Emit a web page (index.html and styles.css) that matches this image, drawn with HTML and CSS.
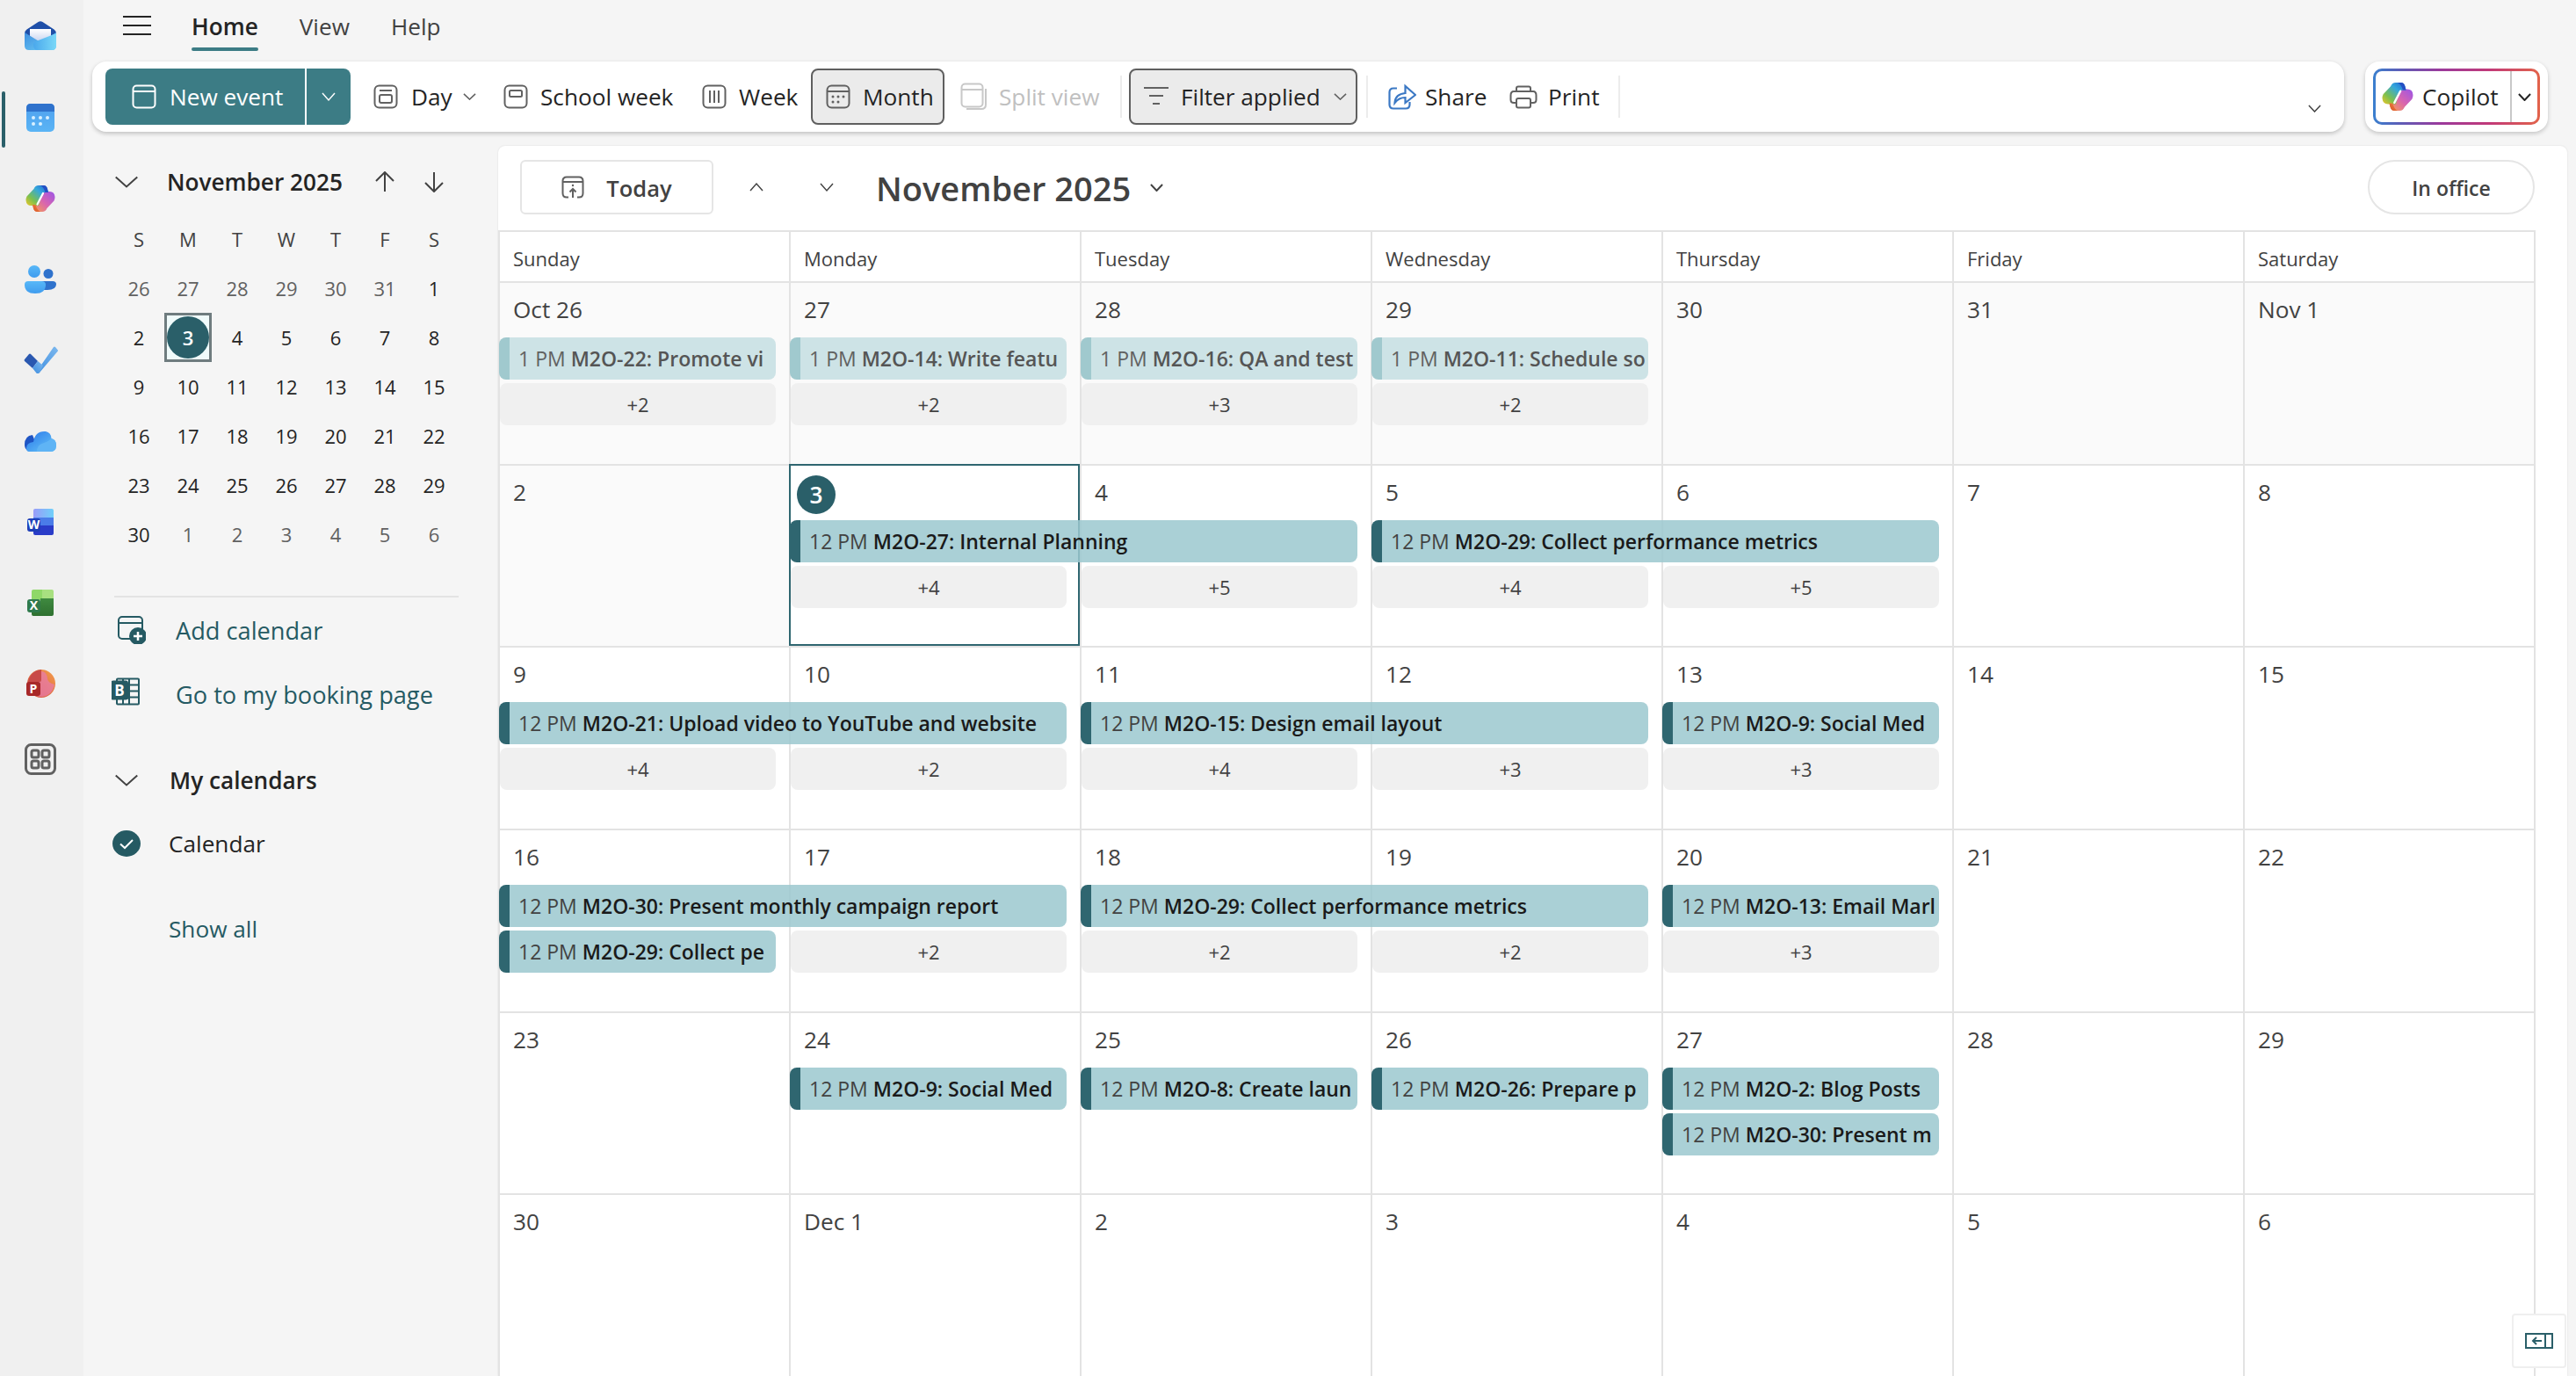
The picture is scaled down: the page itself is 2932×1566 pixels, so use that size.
FILE: index.html
```html
<!DOCTYPE html>
<html lang="en">
<head>
<meta charset="utf-8">
<title>Calendar</title>
<link rel="stylesheet" href="styles.css">
</head>
<body>
<svg class="defs" aria-hidden="true">
  <defs>
    <linearGradient id="gMail" x1="0" y1="0" x2="1" y2="1"><stop offset="0" stop-color="#3f8fe0"/><stop offset="1" stop-color="#6fd0f5"/></linearGradient>
    <linearGradient id="gMail2" x1="0" y1="0" x2="1" y2="0"><stop offset="0" stop-color="#4aa8ec"/><stop offset="1" stop-color="#7ad8f8"/></linearGradient>
    <linearGradient id="gPaper" x1="0" y1="0" x2="0" y2="1"><stop offset="0" stop-color="#ffffff"/><stop offset="1" stop-color="#c8d4f0"/></linearGradient>
    <linearGradient id="gCal" x1="0" y1="0" x2="0" y2="1"><stop offset="0" stop-color="#4fa0ee"/><stop offset="1" stop-color="#5ab4f5"/></linearGradient>
    <linearGradient id="gCoL" x1="1" y1="0" x2="0" y2="1"><stop offset="0" stop-color="#1f5fd0"/><stop offset=".35" stop-color="#35a8dc"/><stop offset=".7" stop-color="#7cc04e"/><stop offset="1" stop-color="#f0c628"/></linearGradient>
    <linearGradient id="gCoR" x1="1" y1="0" x2="0" y2="1"><stop offset="0" stop-color="#9a55e8"/><stop offset=".5" stop-color="#d864b0"/><stop offset="1" stop-color="#f8a24c"/></linearGradient>
    <linearGradient id="gCoB" x1="0" y1="1" x2="1" y2="0"><stop offset="0" stop-color="#d8512c"/><stop offset="1" stop-color="#f08a3c"/></linearGradient>
    <linearGradient id="gPpl" x1="0" y1="0" x2="0" y2="1"><stop offset="0" stop-color="#58b8f8"/><stop offset="1" stop-color="#3f9cee"/></linearGradient>
    <linearGradient id="gTodo" x1="0" y1="1" x2="1" y2="0"><stop offset="0" stop-color="#3f8ee0"/><stop offset="1" stop-color="#7cb8ee"/></linearGradient>
    <linearGradient id="gOne" x1="0" y1="0" x2="1" y2="1"><stop offset="0" stop-color="#2a78ea"/><stop offset="1" stop-color="#68c8f8"/></linearGradient>
    <linearGradient id="gWord" x1="0" y1="0" x2="1" y2="0"><stop offset="0" stop-color="#9a9cf8"/><stop offset="1" stop-color="#6fd0fa"/></linearGradient>
    <linearGradient id="gExcel" x1="0" y1="0" x2="0" y2="1"><stop offset="0" stop-color="#3f8a40"/><stop offset="1" stop-color="#2f7030"/></linearGradient>
    <linearGradient id="gPpt" x1="1" y1="0" x2="0" y2="1"><stop offset="0" stop-color="#f5a04c"/><stop offset="1" stop-color="#d04a40"/></linearGradient>
    <symbol id="chev" viewBox="0 0 16 9" preserveAspectRatio="none"><path d="M1 1 8 8 15 1" vector-effect="non-scaling-stroke"/></symbol>
    <symbol id="copilot" viewBox="0 0 34 32">
      <path fill="url(#gCoR)" d="M24.500 27Q23 31 19 31h-5.500q-3.500 0-4.500-4l-1-4h3q3.500 0 4.500-3.500L19 8h8.500Q33 8 33.500 14q.2 2-1 4.500z"/>
      <path fill="url(#gCoL)" d="M9.500 5Q11 1 15 1h5.500q3.500 0 4.500 4l1 4h-3q-3.500 0-4.500 3.500L15 24H6.500Q1 24 .5 18q-.2-2 1-4.500z"/>
      <path fill="#2450c4" d="M17 1h3.500q3.500 0 4.500 4l1 4h-3.500Q21 3 17 1z"/>
      <path fill="url(#gCoB)" d="M17 31h-3.500Q10 31 9 27l-1-4h3.500Q13 29 17 31z"/>
      <path fill="none" stroke="#fff" stroke-width="2.200" stroke-linecap="round" d="M20 10 13.500 22.500"/>
    </symbol>
  </defs>
</svg>

<nav class="rail">
  <a class="rail-item"><svg class="i-mail" viewBox="0 0 36 33"><path fill="#1f4fa8" d="M15.500 1q2.500-1.500 5 0l13 8.500Q36 11 36 14v4H0v-4q0-3 2.500-4.500z"/><path fill="url(#gPaper)" d="M6 9h24v14H6z"/><path fill="url(#gMail)" d="M0 13l18 11 18-11v15q0 5-5 5H5q-5 0-5-5z"/><path fill="url(#gMail2)" d="M10 27q0-3 3-4l23-9v14q0 5-5 5H15q-5 0-5-6z"/></svg></a>
  <a class="rail-item is-active"><svg class="i-cal" viewBox="0 0 32 32"><rect width="32" height="32" rx="5" fill="url(#gCal)"/><path fill="#2f72cc" d="M5 0h22q5 0 5 5v4H0V5q0-5 5-5z"/><g fill="#d9f0ff"><circle cx="8" cy="16" r="2"/><circle cx="16" cy="16" r="2"/><circle cx="24" cy="16" r="2"/><circle cx="8" cy="23" r="2"/><circle cx="16" cy="23" r="2"/></g></svg></a>
  <a class="rail-item"><svg class="i-co"><use href="#copilot"/></svg></a>
  <a class="rail-item"><svg class="i-ppl" viewBox="0 0 36 32"><circle cx="27" cy="9.500" r="5.500" fill="#2f72cc"/><path fill="#2f72cc" d="M18 18h14q4 0 4 3.500Q36 28 26 28q-8 0-8-2z"/><circle cx="11" cy="7" r="7" fill="url(#gPpl)"/><path fill="url(#gPpl)" d="M4 18h15q5 0 5 4 0 10-12 10T0 22q0-4 4-4z"/></svg></a>
  <a class="rail-item"><svg class="i-todo" viewBox="0 0 39 32"><path fill="url(#gTodo)" d="M14 30 34 1q1-1 2 0l2.500 3q1 1 0 2L18 30q-2 2-4 0z"/><path fill="#2a58b0" d="M1 15l5-6q1-1 2 0l8 8-6 8-9-8q-1-1 0-2z"/><path fill="url(#gTodo)" d="M10 25l6-8 6 5-4 8q-2 2-4 0z"/></svg></a>
  <a class="rail-item"><svg class="i-one" viewBox="0 0 36 24"><path fill="#1f55c4" d="M0 16Q0 6 9 5l4 10-6 9Q0 23 0 16z"/><path fill="url(#gOne)" d="M5 24Q2 24 2 20q0-6 8-7 2-13 14-12 6 1 6.500 8Q36 10 36 17q0 7-7 7z"/><path fill="#5fb4f5" d="M14 24q0-8 8-10 6-2 8-5 6 1 6 8 0 7-7 7z"/></svg></a>
  <a class="rail-item"><svg class="i-off" viewBox="0 0 30 30"><path fill="url(#gWord)" d="M7 2q0-2 2-2h19q2 0 2 2v10H7z"/><rect x="7" y="10" width="23" height="10" fill="#4a7ce8"/><path fill="#2a3cc8" d="M7 19h23v9q0 2-2 2H9q-2 0-2-2z"/><rect y="11" width="15" height="15" rx="3" fill="#1f3fb8"/><text class="i-letter" x="7.500" y="23">W</text></svg></a>
  <a class="rail-item"><svg class="i-off" viewBox="0 0 30 30"><path fill="#8fd868" d="M5 2q0-2 2-2h10v12H5z"/><path fill="#a8e080" d="M17 0h11q2 0 2 2v8H17z"/><path fill="url(#gExcel)" d="M15 10h15v18q0 2-2 2H7q-2 0-2-2v-8h10z"/><rect y="11" width="15" height="15" rx="3" fill="#2f7a4c"/><text class="i-letter" x="7.500" y="23">X</text></svg></a>
  <a class="rail-item"><svg class="i-ppt" viewBox="0 0 33 32"><circle cx="17" cy="16" r="16" fill="url(#gPpt)"/><path fill="#e87ca8" d="M17 2q6 0 7 8 0 5 8 7-3 13-14 14-8 0-11-6V8q5-6 10-6z" opacity=".75"/><path fill="#c84a48" d="M17 0Q5 1 2 14h13q2 0 2-2z"/><rect y="14" width="16" height="16" rx="3" fill="#a82828"/><text class="i-letter" x="8" y="26.500">P</text></svg></a>
  <a class="rail-item rail-apps"><svg class="i-apps" viewBox="0 0 36 36"><rect x="1.500" y="1.500" width="33" height="33" rx="6"/><rect x="8" y="8" width="8" height="8" rx="2"/><rect x="20" y="8" width="8" height="8" rx="2"/><rect x="8" y="20" width="8" height="8" rx="2"/><rect x="20" y="20" width="8" height="8" rx="2"/></svg></a>
</nav>

<div class="app">
  <header class="tabs">
    <svg class="burger" viewBox="0 0 32 22"><path d="M0 1h32M0 11h32M0 21h32"/></svg>
    <span class="tab is-on">Home</span>
    <span class="tab tab-view">View</span>
    <span class="tab tab-help">Help</span>
  </header>

  <div class="bars">
    <div class="toolbar">
      <div class="newbtn">
        <span class="newmain"><svg class="ico ico-w" viewBox="0 0 28 28"><rect x="1.500" y="1.500" width="25" height="25" rx="4"/><path d="M2 8h24"/></svg>New event</span>
        <span class="newdrop"><svg class="chev"><use href="#chev"/></svg></span>
      </div>
      <div class="tool t-day"><svg class="ico" viewBox="0 0 28 28"><rect x="1.500" y="1.500" width="25" height="25" rx="5"/><path d="M7 7h14"/><rect x="7" y="12" width="14" height="9" rx="2"/></svg><span>Day</span><svg class="chev"><use href="#chev"/></svg></div>
      <div class="tool t-school"><svg class="ico" viewBox="0 0 28 28"><rect x="1.500" y="1.500" width="25" height="25" rx="5"/><rect x="7" y="7" width="14" height="7" rx="1.500"/></svg><span>School week</span></div>
      <div class="tool t-week"><svg class="ico" viewBox="0 0 28 28"><rect x="1.500" y="1.500" width="25" height="25" rx="5"/><path d="M9 7v14M14 7v14M19 7v14"/></svg><span>Week</span></div>
      <div class="tool t-month is-sel"><svg class="ico" viewBox="0 0 28 28"><rect x="1.500" y="1.500" width="25" height="25" rx="5"/><path d="M2 8h24"/><g class="dots"><circle cx="8" cy="14" r="1.500"/><circle cx="14" cy="14" r="1.500"/><circle cx="20" cy="14" r="1.500"/><circle cx="8" cy="20" r="1.500"/><circle cx="14" cy="20" r="1.500"/></g></svg><span>Month</span></div>
      <div class="tool t-split"><svg class="ico ico-split" viewBox="0 0 31 32"><rect x="1.500" y="1.500" width="24" height="26" rx="4"/><path d="M2 8h23M29 7v18q0 5-5 5H7"/></svg><span>Split view</span></div>
      <i class="sep sep-a"></i>
      <div class="tool t-filter is-sel"><svg class="ico" viewBox="0 0 28 28"><path d="M0 4h28M6 13h16M10 22h8"/></svg><span>Filter applied</span><svg class="chev"><use href="#chev"/></svg></div>
      <i class="sep sep-b"></i>
      <div class="tool t-share"><svg class="ico ico-blue" viewBox="0 0 32 30"><path d="M10 5.500H6Q1.500 5.500 1.500 10v14Q1.500 28.500 6 28.500h14q4.500 0 4.500-4.500v-3"/><path d="M7.500 22Q8 12 19.500 11V3L31 13 19.500 22v-6Q12 16 7.500 22z"/></svg><span>Share</span></div>
      <div class="tool t-print"><svg class="ico" viewBox="0 0 32 27"><path d="M8 7V3.500Q8 1.500 10 1.500h12q2 0 2 2V7M8 20H5q-3.500 0-3.500-3.500v-5Q1.500 7 5 7h22q3.500 0 3.500 4.500v5Q30.500 20 27 20h-3"/><rect x="8" y="15" width="16" height="10.500" rx="2"/></svg><span>Print</span></div>
      <i class="sep sep-c"></i>
      <svg class="chev chev-more"><use href="#chev"/></svg>
    </div>
    <div class="copilot-wrap">
      <div class="copilot">
        <span class="co-main"><svg class="co-logo"><use href="#copilot"/></svg>Copilot</span>
        <span class="co-drop"><svg class="chev"><use href="#chev"/></svg></span>
      </div>
    </div>
  </div>

  <div class="work">
    <aside class="side">
      <div class="mini-head">
        <svg class="chev chev-big"><use href="#chev"/></svg>
        <span class="mini-title">November 2025</span>
        <svg class="arrow arrow-up" viewBox="0 0 24 24"><path d="M12 23V1M2 11 12 1l10 10"/></svg>
        <svg class="arrow" viewBox="0 0 24 24"><path d="M12 1v22M2 13l10 10 10-10"/></svg>
      </div>
      <div class="mini-grid">
        <span class="dh">S</span><span class="dh">M</span><span class="dh">T</span><span class="dh">W</span><span class="dh">T</span><span class="dh">F</span><span class="dh">S</span>
        <span class="out">26</span><span class="out">27</span><span class="out">28</span><span class="out">29</span><span class="out">30</span><span class="out">31</span><span>1</span>
        <span>2</span><span class="mini-today"><b>3</b></span><span>4</span><span>5</span><span>6</span><span>7</span><span>8</span>
        <span>9</span><span>10</span><span>11</span><span>12</span><span>13</span><span>14</span><span>15</span>
        <span>16</span><span>17</span><span>18</span><span>19</span><span>20</span><span>21</span><span>22</span>
        <span>23</span><span>24</span><span>25</span><span>26</span><span>27</span><span>28</span><span>29</span>
        <span>30</span><span class="out">1</span><span class="out">2</span><span class="out">3</span><span class="out">4</span><span class="out">5</span><span class="out">6</span>
      </div>
      <div class="side-div"></div>
      <a class="link"><svg class="link-ico ico-add" viewBox="0 0 32 32"><rect x="1" y="1" width="27" height="25" rx="4"/><path d="M1.500 8h26"/><circle class="solid" cx="23" cy="23" r="9"/><path class="plus" d="M23 18v10M18 23h10"/></svg>Add calendar</a>
      <a class="link"><svg class="link-ico ico-book" viewBox="0 0 32 31"><rect x="6" y="1" width="25" height="29" rx="1"/><path d="M20 1v29M20 8h11M20 15h11M20 22h11M6 8h14M6 23h14M13 1v7M13 23v7"/><rect class="solid" y="4" width="18" height="20" rx="2"/><text class="book-b" x="9" y="20">B</text></svg>Go to my booking page</a>
      <div class="group"><svg class="chev chev-big"><use href="#chev"/></svg><span>My calendars</span></div>
      <div class="calrow"><svg class="check" viewBox="0 0 32 30"><ellipse cx="16" cy="15" rx="16" ry="15"/><path d="M9 15.500l5 4.500 9-9"/></svg><span>Calendar</span></div>
      <a class="showall">Show all</a>
    </aside>

    <main class="panel">
      <div class="panel-head">
        <button class="today"><svg class="ico" viewBox="0 0 26 26"><path d="M8 24.500H6q-4.500 0-4.500-4.500V6Q1.500 1.500 6 1.500h14q4.500 0 4.500 4.500v14q0 4.500-4.500 4.500h-2M2 7h22M13 25V15M9.500 18.500 13 15l3.500 3.500"/><circle class="dot" cx="13" cy="11" r="1.200"/></svg><span class="today-label">Today</span></button>
        <svg class="chev nav-up"><use href="#chev"/></svg>
        <svg class="chev nav-down"><use href="#chev"/></svg>
        <h1 class="title">November 2025</h1>
        <svg class="chev title-chev"><use href="#chev"/></svg>
        <span class="inoffice">In office</span>
      </div>
      <div class="dow">
        <span>Sunday</span><span>Monday</span><span>Tuesday</span><span>Wednesday</span><span>Thursday</span><span>Friday</span><span>Saturday</span>
      </div>
      <div class="weeks">
        <section class="week">
          <div class="day past c1">Oct 26</div><div class="day past c2">27</div><div class="day past c3">28</div><div class="day past c4">29</div><div class="day past c5">30</div><div class="day past c6">31</div><div class="day past c7">Nov 1</div>
          <div class="ev old c1 r1"><span>1 PM</span> <b>M2O-22: Promote vi</b></div>
          <div class="ev old c2 r1"><span>1 PM</span> <b>M2O-14: Write featu</b></div>
          <div class="ev old c3 r1"><span>1 PM</span> <b>M2O-16: QA and test</b></div>
          <div class="ev old c4 r1"><span>1 PM</span> <b>M2O-11: Schedule so</b></div>
          <div class="more c1">+2</div><div class="more c2">+2</div><div class="more c3">+3</div><div class="more c4">+2</div>
        </section>
        <section class="week">
          <div class="day past c1">2</div><div class="day is-today c2"><b>3</b></div><div class="day c3">4</div><div class="day c4">5</div><div class="day c5">6</div><div class="day c6">7</div><div class="day c7">8</div>
          <div class="ev c2 s2 r1"><span>12 PM</span> <b>M2O-27: Internal Planning</b></div>
          <div class="ev c4 s2 r1"><span>12 PM</span> <b>M2O-29: Collect performance metrics</b></div>
          <div class="more c2">+4</div><div class="more c3">+5</div><div class="more c4">+4</div><div class="more c5">+5</div>
        </section>
        <section class="week">
          <div class="day c1">9</div><div class="day c2">10</div><div class="day c3">11</div><div class="day c4">12</div><div class="day c5">13</div><div class="day c6">14</div><div class="day c7">15</div>
          <div class="ev c1 s2 r1"><span>12 PM</span> <b>M2O-21: Upload video to YouTube and website</b></div>
          <div class="ev c3 s2 r1"><span>12 PM</span> <b>M2O-15: Design email layout</b></div>
          <div class="ev c5 r1"><span>12 PM</span> <b>M2O-9: Social Med</b></div>
          <div class="more c1">+4</div><div class="more c2">+2</div><div class="more c3">+4</div><div class="more c4">+3</div><div class="more c5">+3</div>
        </section>
        <section class="week">
          <div class="day c1">16</div><div class="day c2">17</div><div class="day c3">18</div><div class="day c4">19</div><div class="day c5">20</div><div class="day c6">21</div><div class="day c7">22</div>
          <div class="ev c1 s2 r1"><span>12 PM</span> <b>M2O-30: Present monthly campaign report</b></div>
          <div class="ev c3 s2 r1"><span>12 PM</span> <b>M2O-29: Collect performance metrics</b></div>
          <div class="ev c5 r1"><span>12 PM</span> <b>M2O-13: Email Marl</b></div>
          <div class="ev c1 r2"><span>12 PM</span> <b>M2O-29: Collect pe</b></div>
          <div class="more c2">+2</div><div class="more c3">+2</div><div class="more c4">+2</div><div class="more c5">+3</div>
        </section>
        <section class="week">
          <div class="day c1">23</div><div class="day c2">24</div><div class="day c3">25</div><div class="day c4">26</div><div class="day c5">27</div><div class="day c6">28</div><div class="day c7">29</div>
          <div class="ev c2 r1"><span>12 PM</span> <b>M2O-9: Social Med</b></div>
          <div class="ev c3 r1"><span>12 PM</span> <b>M2O-8: Create laun</b></div>
          <div class="ev c4 r1"><span>12 PM</span> <b>M2O-26: Prepare p</b></div>
          <div class="ev c5 r1"><span>12 PM</span> <b>M2O-2: Blog Posts</b></div>
          <div class="ev c5 r2"><span>12 PM</span> <b>M2O-30: Present m</b></div>
        </section>
        <section class="week">
          <div class="day c1">30</div><div class="day c2">Dec 1</div><div class="day c3">2</div><div class="day c4">3</div><div class="day c5">4</div><div class="day c6">5</div><div class="day c7">6</div>
        </section>
      </div>
      <button class="collapse"><svg viewBox="0 0 32 18"><rect x="1" y="1" width="30" height="16"/><path d="M23 1v16M19 9H9M13 5 9 9l4 4"/></svg></button>
    </main>
  </div>
</div>
</body>
</html>
```

FILE: styles.css
```css
* { box-sizing: border-box; }
html, body { margin: 0; height: 100%; }
body {
  display: flex;
  height: 1566px;
  overflow: hidden;
  background: #f5f5f5;
  color: #242424;
  font-family: "Open Sans", "Noto Sans", "Liberation Sans", sans-serif;
  font-size: 26.200px;
}
.defs { width: 0; height: 0; flex: none; }
svg { display: block; flex: none; }

/* rail */
.rail {
  width: 95px;
  flex: none;
  background: #f0f0f0;
  padding-right: 3px;
}
.rail-item {
  height: 92px;
  display: flex;
  align-items: center;
  justify-content: center;
  position: relative;
}
.rail-item:first-child { margin-top: -6px; margin-bottom: 2px; }
.rail-item.is-active::before {
  content: "";
  position: absolute;
  left: 2px;
  top: 16px;
  width: 4px;
  height: 64px;
  border-radius: 2px;
  background: #2a5f69;
}
.rail-apps { margin-top: -6px; }
.i-mail { width: 36px; height: 33px; }
.i-cal { width: 32px; height: 32px; }
.i-co { width: 34px; height: 32px; }
.i-ppl { width: 36px; height: 32px; }
.i-todo { width: 39px; height: 32px; }
.i-one { width: 36px; height: 24px; }
.i-off { width: 30px; height: 30px; }
.i-ppt { width: 33px; height: 32px; }
.i-apps { width: 36px; height: 36px; fill: none; stroke: #616161; stroke-width: 3; }
.i-letter { font: 700 14px "Open Sans", sans-serif; fill: #fff; text-anchor: middle; }

.app { flex: 1; min-width: 0; display: flex; flex-direction: column; }

/* tabs */
.tabs { height: 70px; display: flex; align-items: flex-start; flex: none; }
.burger { width: 32px; height: 22px; margin: 18px 0 0 45px; fill: none; stroke: #242424; stroke-width: 2; }
.tab { margin-top: 10px; line-height: 40px; color: #424242; position: relative; }
.tab.is-on { margin-left: 46px; color: #242424; font-weight: 600; }
.tab.is-on::after {
  content: "";
  position: absolute;
  left: 0; right: 0;
  top: 44px;
  height: 4px;
  border-radius: 2px;
  background: #3c7c85;
}
.tab-view { margin-left: 47px; }
.tab-help { margin-left: 47px; }

/* toolbar */
.bars { display: flex; height: 80px; flex: none; margin-left: 10px; gap: 24px; }
.toolbar {
  width: 2563px;
  background: #fff;
  border-radius: 16px;
  box-shadow: 0 2px 5px rgba(0,0,0,.22);
  display: flex;
  align-items: center;
  padding-left: 15px;
  position: relative;
}
.newbtn { display: flex; height: 64px; background: #3c7c85; border-radius: 8px; color: #fff; flex: none; }
.newmain { width: 227px; padding-left: 30px; display: flex; align-items: center; gap: 15px; }
.newdrop { width: 52px; border-left: 2px solid #fff; display: flex; align-items: center; justify-content: center; }
.newdrop .chev { width: 16px; height: 10px; color: #fff; }
.ico { width: 28px; height: 28px; fill: none; stroke: #616161; stroke-width: 2; }
.ico .dots, .ico .dot { fill: #616161; stroke: none; }
.ico-w { stroke: #fff; }
.ico-split { width: 31px; height: 32px; stroke: #c8c8c8; }
.ico-blue { width: 32px; height: 30px; stroke: #3b78c4; stroke-width: 2.200; }
.chev { width: 15px; height: 8px; fill: none; stroke: currentColor; stroke-width: 1.500; color: #616161; }
.tool { display: flex; align-items: center; height: 64px; flex: none; gap: 14px; }
.tool span { white-space: nowrap; }
.t-day { margin-left: 26px; gap: 15px; }
.t-day span { width: 46px; }
.t-day .chev { margin-left: -2px; }
.t-school { margin-left: 31px; }
.t-school span { width: 153px; }
.t-week { margin-left: 31px; }
.t-week span { width: 68px; }
.t-month { margin-left: 14px; padding: 0 9px 0 15px; }
.t-month span { width: 82px; }
.is-sel { background: #ebebeb; border: 2px solid #5f5f5f; border-radius: 8px; }
.t-split { margin-left: 18px; color: #c0c0c0; gap: 13px; }
.t-split span { width: 117px; }
.sep { width: 2px; height: 48px; background: #ececec; flex: none; }
.sep-a { margin-left: 21px; }
.t-filter { margin-left: 8px; padding: 0 10px 0 15px; }
.t-filter span { width: 160px; }
.sep-b { margin-left: 10px; }
.t-share { margin-left: 23px; gap: 10px; }
.t-share span { width: 69px; }
.t-print { margin-left: 27px; gap: 12px; }
.t-print span { width: 58px; }
.t-print .ico { width: 32px; height: 27px; }
.sep-c { margin-left: 22px; }
.chev-more { position: absolute; right: 26px; top: 49px; width: 15px; height: 9px; color: #424242; }

.copilot-wrap {
  width: 208px;
  flex: none;
  background: #fff;
  border-radius: 16px;
  box-shadow: 0 2px 5px rgba(0,0,0,.2);
  padding: 8px 9px;
}
.copilot {
  height: 64px;
  display: flex;
  border: 3px solid transparent;
  border-radius: 10px;
  background: linear-gradient(#fff,#fff) padding-box,
              linear-gradient(90deg,#3a80cf 0%,#5a5fb8 15%,#9a3a9c 40%,#c23a78 70%,#e2634a 100%) border-box;
}
.co-main { width: 153px; display: flex; align-items: center; gap: 10px; padding-left: 7px; }
.co-logo { width: 36px; height: 34px; }
.co-drop { flex: 1; border-left: 2px solid #c8c8c8; display: flex; align-items: center; justify-content: center; }
.co-drop .chev { width: 15px; height: 9px; color: #242424; stroke-width: 2; }

/* work area */
.work { flex: 1; min-height: 0; display: flex; margin-top: 16px; }
.side { width: 472px; flex: none; padding: 21px 0 0 35px; }
.mini-head { display: flex; align-items: center; height: 40px; }
.chev-big { width: 28px; height: 14px; color: #424242; stroke-width: 2; }
.mini-title { margin-left: 32px; width: 236px; font-weight: 600; font-size: 26.200px; white-space: nowrap; }
.arrow { width: 24px; height: 24px; fill: none; stroke: #424242; stroke-width: 2; }
.arrow-up { margin-right: 32px; }
.mini-grid { margin-top: 17px; display: grid; grid-template-columns: repeat(7,56px); grid-auto-rows: 56px; font-size: 22px; }
.mini-grid > span { display: flex; align-items: center; justify-content: center; }
.mini-grid .dh { color: #424242; }
.mini-grid .out { color: #616161; }
.mini-today {
  margin: 0 1px;
  border: 3px solid #6f7c7f;
  background: #f0fbfb;
}
.mini-today b { width: 48px; height: 48px; flex: none; border-radius: 50%; background: #2a5f69; color: #fff; font-weight: 600; display: flex; align-items: center; justify-content: center; }
.side-div { width: 392px; height: 2px; background: #e3e3e3; margin-top: 42px; margin-bottom: 1px; }
.link { height: 72px; display: flex; align-items: center; color: #255a63; font-size: 27.200px; position: relative; padding-left: 70px; margin-top: 1px; white-space: nowrap; }
.link-ico { position: absolute; width: 32px; height: 32px; fill: none; stroke: #255a63; stroke-width: 2; }
.ico-add { left: 4px; }
.ico-book { left: -3px; margin-top: -6px; }
.link-ico .solid { fill: #255a63; stroke: #255a63; }
.link-ico .plus { stroke: #fff; stroke-width: 2.500; }
.book-b { font: 700 17px "Open Sans", sans-serif; fill: #fff; stroke: none; text-anchor: middle; }
.group { margin-top: 34px; height: 56px; display: flex; align-items: center; gap: 35px; font-weight: 600; }
.calrow { margin-top: 16px; height: 56px; display: flex; align-items: center; gap: 32px; margin-left: -2px; }
.check { width: 32px; height: 30px; fill: #255a63; }
.check path { fill: none; stroke: #fff; stroke-width: 2; }
.showall { display: block; margin: 41px 0 0 62px; line-height: 56px; color: #255a63; }

/* panel */
.panel {
  flex: 1;
  min-width: 0;
  margin-right: 10px;
  background: #fff;
  border-radius: 8px 8px 0 0;
  box-shadow: 0 0 2px rgba(0,0,0,.12);
  padding-right: 36px;
  display: flex;
  flex-direction: column;
  position: relative;
}
.panel-head { height: 96px; flex: none; display: flex; align-items: center; padding: 0 1px 0 25px; color: #424242; }
.panel-head > * { margin-top: -2px; }
.today {
  width: 220px;
  height: 62px;
  display: flex;
  align-items: center;
  justify-content: center;
  gap: 25px;
  background: #fff;
  border: 2px solid #e5e5e5;
  border-radius: 6px;
  font: 600 25.500px "Open Sans", sans-serif;
  color: #424242;
}
.today-label { padding-top: 2px; }
.today .ico { width: 26px; height: 26px; }
.nav-up { transform: scaleY(-1); margin-left: 41px; width: 16px; height: 10px; color: #424242; }
.nav-down { margin-left: 64px; width: 16px; height: 10px; color: #424242; }
.title { margin: 0 0 0 48px; font-size: 38px; font-weight: 600; color: #424242; white-space: nowrap; }
.title-chev { margin-left: 22px; width: 15px; height: 9px; color: #424242; stroke-width: 2; }
.inoffice {
  margin-left: auto;
  width: 190px;
  height: 62px;
  border: 2px solid #e5e5e5;
  border-radius: 31px;
  padding-top: 2px;
  display: flex;
  align-items: center;
  justify-content: center;
  font-size: 23px;
  font-weight: 600;
  color: #424242;
}
.dow {
  height: 58px;
  flex: none;
  display: grid;
  grid-template-columns: repeat(7,minmax(0,1fr));
  border-top: 2px solid #e3e3e3;
  border-right: 2px solid #e3e3e3;
}
.dow span { border-left: 2px solid #e3e3e3; padding: 13px 0 0 15px; font-size: 22px; line-height: 34px; color: #424242; }
.weeks { flex: 1; min-height: 0; display: grid; grid-template-rows: repeat(6,minmax(0,1fr)); border-right: 2px solid #e3e3e3; }
.week {
  min-height: 0;
  display: grid;
  grid-template-columns: repeat(7,minmax(0,1fr));
  grid-template-rows: 62px 48px 4px 48px 1fr;
  border-top: 2px solid #e3e3e3;
}
.day {
  grid-row: 1 / -1;
  border-left: 2px solid #e3e3e3;
  padding: 11px 0 0 15px;
  font-size: 26.200px;
  line-height: 38px;
  color: #424242;
}
.past { background: #fafafa; }
.is-today { border: 2px solid #2f6670; margin: -2px 0 0 0; padding: 11px 0 0 7px; background: #fff; }
.is-today b { display: flex; align-items: center; justify-content: center; width: 44px; height: 44px; border-radius: 50%; background: #2a5f69; color: #fff; font-weight: 600; }
.c1 { grid-column-start: 1; }
.c2 { grid-column-start: 2; }
.c3 { grid-column-start: 3; }
.c4 { grid-column-start: 4; }
.c5 { grid-column-start: 5; }
.c6 { grid-column-start: 6; }
.c7 { grid-column-start: 7; }
.s2 { grid-column-end: span 2; }
.r1 { grid-row: 2; }
.r2 { grid-row: 4; }
.ev {
  margin: 0 15px 0 1px;
  height: 48px;
  background: rgba(155,200,207,.85);
  border-left: 12px solid #2f6670;
  border-radius: 8px;
  padding: 0 4px 0 10px;
  white-space: nowrap;
  overflow: hidden;
  font-size: 23px;
  line-height: 48px;
  color: #424242;
}
.ev b { font-weight: 600; color: #1a1a1a; }
.old { background: #cde3e6; border-left-color: #a0c9ce; color: #616161; }
.old b { color: #555; }
.more {
  grid-row: 4;
  margin: 0 15px 0 2px;
  height: 48px;
  border-radius: 8px;
  background: #f0f0f0;
  display: flex;
  align-items: center;
  justify-content: center;
  font-size: 22px;
  color: #424242;
}
.collapse {
  position: absolute;
  right: 1px;
  bottom: 9px;
  width: 62px;
  height: 62px;
  background: #fff;
  border: 2px solid #efefef;
  border-radius: 4px;
  padding: 0;
  display: flex;
  align-items: center;
  justify-content: center;
}
.collapse svg { width: 32px; height: 18px; fill: none; stroke: #2a5f69; stroke-width: 2; }
```
